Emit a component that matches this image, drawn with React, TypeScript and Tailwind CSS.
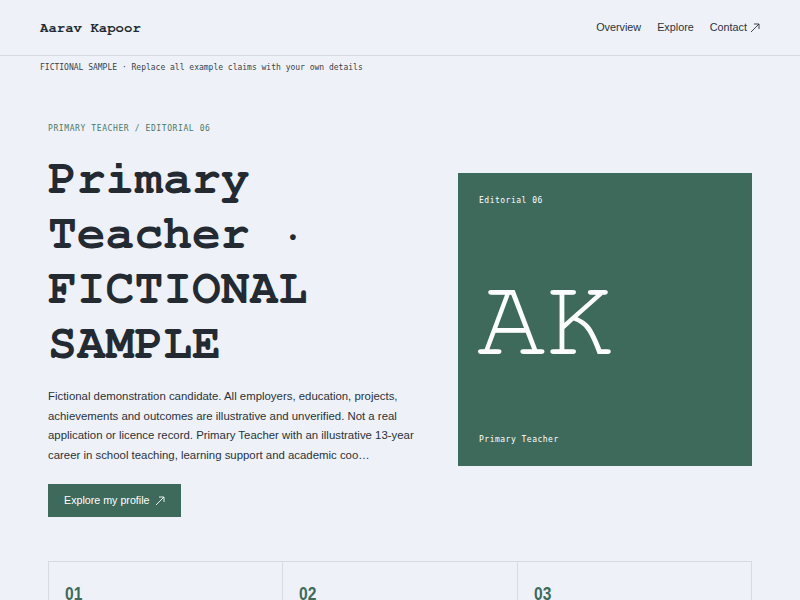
const courier = "font-['Nimbus_Mono_PS','Nimbus_Mono_L','FreeMono','Courier_Prime',Courier,'Courier_New',monospace]";
const dejavu = "font-['DejaVu_Sans_Mono',monospace]";
const sans = "font-['Liberation_Sans',Arial,sans-serif]";

const navLinks = ['Overview', 'Explore'];

function Arrow() {
  return (
    <svg width="10" height="10" viewBox="0 0 10 10" fill="none" stroke="currentColor" strokeWidth="0.9">
      <path d="M1 9 L9 1 M4 1 H9 V6" />
    </svg>
  );
}

export default function App() {
  return (
    <div className={`min-h-screen bg-[#eef2f8] text-[#222a33] ${sans}`}>
      {/* Header */}
      <header className="flex h-[56px] items-center justify-between border-b border-[#d6dbe2] px-10">
        <span className={`${courier} mt-[2px] text-[14px] font-bold`}>Aarav Kapoor</span>
        <nav className="flex items-center gap-4 text-[10.8px] text-[#2a323b]">
          {navLinks.map((link) => (
            <a key={link} href="#">
              {link}
            </a>
          ))}
          <a href="#" className="flex items-center gap-[3px]">
            Contact
            <Arrow />
          </a>
        </nav>
      </header>

      {/* Notice */}
      <div className={`${dejavu} px-10 pt-[6px] text-[8px] text-[#3a4249]`}>
        FICTIONAL SAMPLE · Replace all example claims with your own details
      </div>

      <main className="px-12">
        {/* Hero */}
        <section className="grid grid-cols-[1fr_294px] pt-[49px]">
          <div>
            <p className={`${dejavu} text-[8px] tracking-[0.6px] text-[#4b7767]`}>
              PRIMARY TEACHER / EDITORIAL 06
            </p>
            <h1 className={`${courier} mt-[17px] text-[48px] font-bold leading-[55px] text-[#232a31]`}>
              Primary Teacher · FICTIONAL SAMPLE
            </h1>
            <p className="mt-[15px] max-w-[390px] text-[11.4px] leading-[19.5px] text-[#2a3138]">
              Fictional demonstration candidate. All employers, education, projects, achievements and outcomes are
              illustrative and unverified. Not a real application or licence record. Primary Teacher with an
              illustrative 13-year career in school teaching, learning support and academic coo…
            </p>
            <a
              href="#"
              className="mt-[19px] inline-flex h-[33px] items-center gap-[5px] bg-[#3d6a5b] px-4 text-[10.7px] text-white"
            >
              Explore my profile
              <Arrow />
            </a>
          </div>

          <div className="mt-[50px] flex h-[293px] flex-col bg-[#3d6a5b] px-[21px] pb-[20px] pt-[22px] text-white">
            <span className={`${dejavu} text-[8px] tracking-[0.5px]`}>Editorial 06</span>
            <div className="flex flex-1 items-center">
              <span className={`${courier} -ml-[2px] -mt-[2px] text-[114px] leading-none`}>AK</span>
            </div>
            <span className={`${dejavu} text-[8px] tracking-[0.5px]`}>Primary Teacher</span>
          </div>
        </section>

        {/* Highlights */}
        <section className="mt-[44px] grid grid-cols-3 border-l border-t border-[#d6dbe2]">
          {['01', '02', '03'].map((n) => (
            <div key={n} className="h-[120px] border-r border-[#d6dbe2] px-4 pt-[18px]">
              <span className="inline-block origin-left scale-x-[0.82] text-[19px] font-bold text-[#3d6a5b]">
                {n}
              </span>
            </div>
          ))}
        </section>
      </main>
    </div>
  );
}
